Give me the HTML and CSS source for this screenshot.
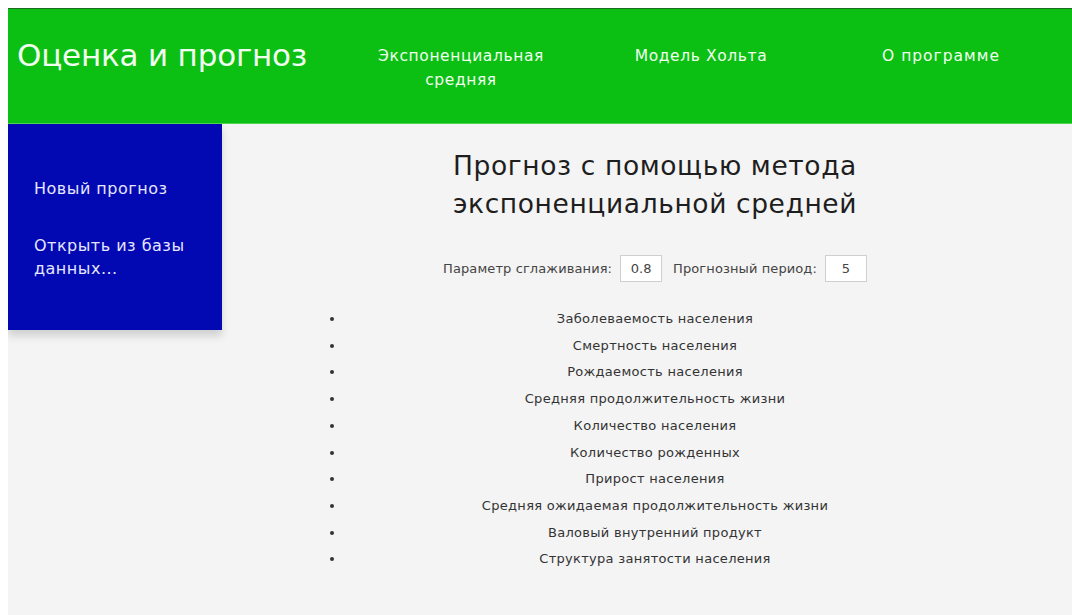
FILE: index.html
```html
<!DOCTYPE html>
<html lang="ru">
<head>
<meta charset="utf-8">
<title>Оценка и прогноз</title>
<link rel="stylesheet" href="styles.css">
</head>
<body>
<div class="page">
  <header class="topbar">
    <div class="brand">Оценка и прогноз</div>
    <nav class="nav">
      <a class="nav-item">Экспоненциальная<br>средняя</a>
      <a class="nav-item">Модель Хольта</a>
      <a class="nav-item">О программе</a>
    </nav>
  </header>
  <div class="body-row">
    <aside class="sidebar">
      <a class="side-link">Новый прогноз</a>
      <a class="side-link">Открыть из базы данных...</a>
    </aside>
    <main class="content">
      <h1 class="title">Прогноз с помощью метода<br>экспоненциальной средней</h1>
      <div class="params">
        <label class="param-label">Параметр сглаживания:</label>
        <span class="param-box">0.8</span>
        <label class="param-label">Прогнозный период:</label>
        <span class="param-box">5</span>
      </div>
      <ul class="indicators">
        <li>Заболеваемость населения</li>
        <li>Смертность населения</li>
        <li>Рождаемость населения</li>
        <li>Средняя продолжительность жизни</li>
        <li>Количество населения</li>
        <li>Количество рожденных</li>
        <li>Прирост населения</li>
        <li>Средняя ожидаемая продолжительность жизни</li>
        <li>Валовый внутренний продукт</li>
        <li>Структура занятости населения</li>
      </ul>
    </main>
  </div>
</div>
</body>
</html>
```

FILE: styles.css
```css
html, body {
  height: 100%;
}

body {
  margin: 8px 0 0 8px;
  background: #ffffff;
  font-family: "DejaVu Sans", "Liberation Sans", sans-serif;
  overflow: hidden;
}

.page {
  display: flex;
  flex-direction: column;
  min-height: calc(100% - 8px);
}

/* green top bar */
.topbar {
  display: flex;
  align-items: flex-start;
  height: 114px;
  background: #0bbf13;
  border-top: 1px solid #1f6a22;
  border-bottom: 1px solid #4fd455;
  color: #f2fff0;
}

.brand {
  width: 324px;
  padding: 27px 0 0 9px;
  font-size: 31px;
  line-height: 38px;
  letter-spacing: -0.2px;
}

.nav {
  display: flex;
  padding-top: 35px;
}

.nav-item {
  width: 240px;
  text-align: center;
  font-size: 15.5px;
  line-height: 24px;
  letter-spacing: 0.6px;
}

.nav-item:last-child {
  letter-spacing: 1px;
}

.body-row {
  flex: 1;
  display: flex;
  align-items: flex-start;
  background: #f4f4f4;
}

/* blue side menu */
.sidebar {
  display: flex;
  flex-direction: column;
  gap: 34px;
  width: 188px;
  height: 153px;
  padding: 53px 0 0 26px;
  background: #0209b3;
  box-shadow: 0 6px 8px rgba(0, 0, 0, 0.15);
  color: #e6e6ff;
}

.side-link {
  font-size: 16px;
  line-height: 23px;
  letter-spacing: 0.5px;
}

.content {
  flex: 1;
  display: flex;
  flex-direction: column;
  align-items: center;
  padding: 23px 0 0 16px;
  color: #222;
}

.title {
  margin: 0;
  font-weight: normal;
  text-align: center;
  font-size: 26.5px;
  line-height: 38px;
  letter-spacing: 0.6px;
  color: #1e1e1e;
}

.params {
  display: flex;
  align-items: center;
  gap: 8px;
  margin-top: 32px;
  font-size: 13px;
  color: #444;
}

.param-label {
  letter-spacing: 0.1px;
}

.param-box {
  box-sizing: border-box;
  width: 42px;
  height: 27px;
  line-height: 25px;
  text-align: center;
  background: #ffffff;
  border: 1px solid #cfcfcf;
  font-size: 13px;
  color: #444;
}

.param-box + .param-label {
  margin-left: 3px;
}

.indicators {
  width: 620px;
  margin: 24px 0 0;
  padding: 0;
  list-style: disc outside;
  font-size: 13px;
  color: #333;
}

.indicators li {
  text-align: center;
  line-height: 26.7px;
  letter-spacing: 0.3px;
}
```
